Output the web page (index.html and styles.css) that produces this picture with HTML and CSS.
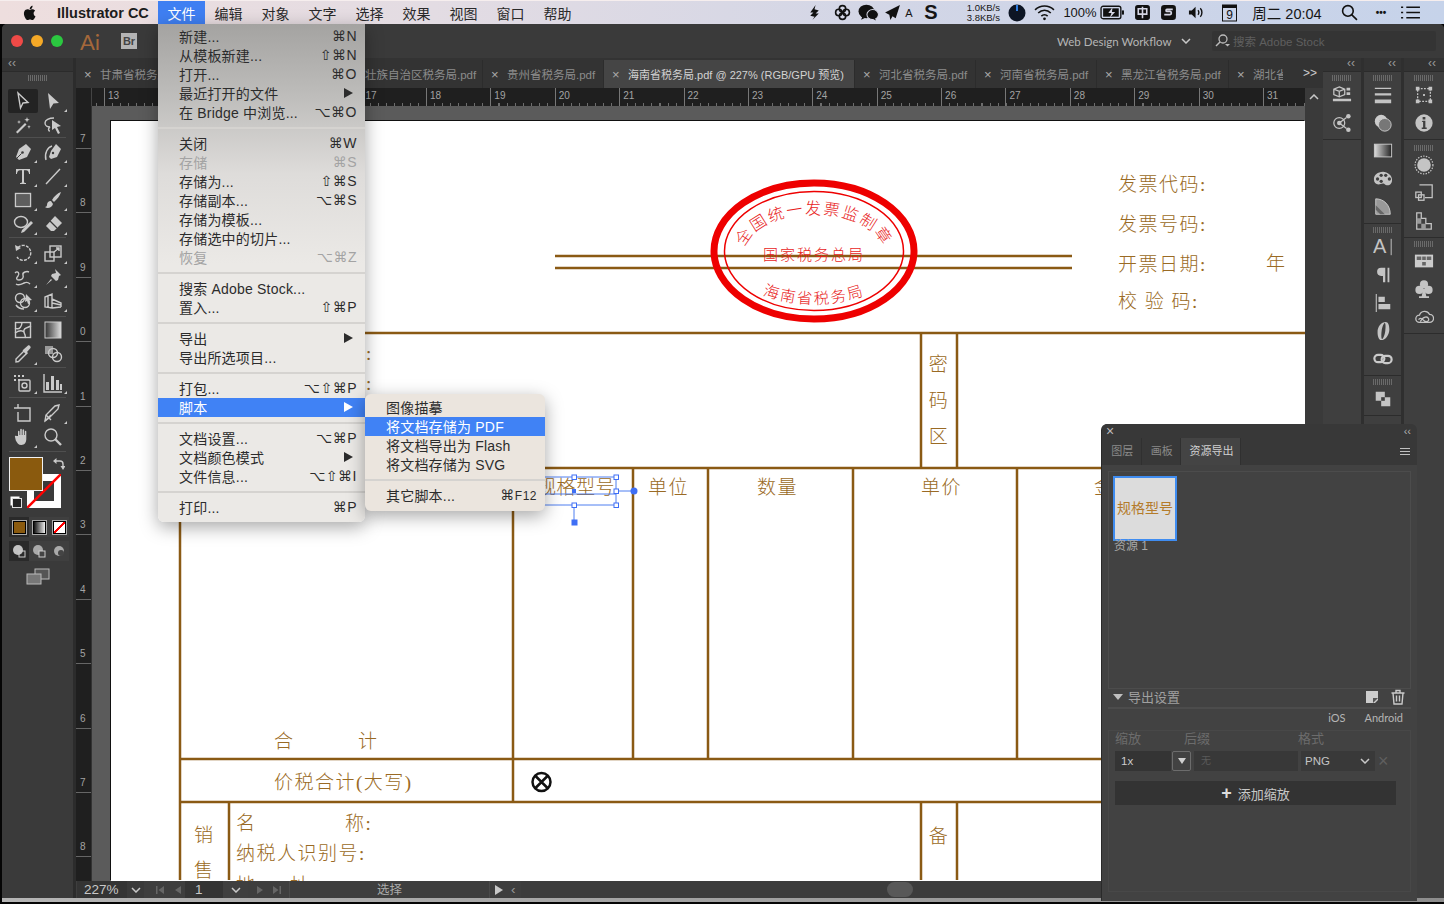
FILE: index.html
```html
<!DOCTYPE html>
<html lang="zh-CN">
<head>
<meta charset="UTF-8" />
<title>Illustrator CC</title>
<link rel="stylesheet" href="styles.css">
</head>
<body>

<!-- mac menu bar -->
<header class="menubar">
  <svg class="apple" viewBox="0 0 20 20"><path d="M14 10.500c0-2 1.600-2.900 1.700-3-1-1.400-2.400-1.600-2.900-1.600-1.200-.1-2.400.7-3 .7s-1.600-.7-2.600-.7c-1.400 0-2.600.8-3.300 2-1.400 2.400-.4 6 1 8 .7 1 1.500 2.100 2.500 2 1 0 1.400-.6 2.600-.6s1.500.6 2.600.6 1.800-1 2.400-2c.8-1.100 1.100-2.200 1.100-2.300-.1 0-2.100-.8-2.100-3.100zM12.100 4.600c.5-.7.900-1.600.8-2.600-.8 0-1.800.5-2.400 1.200-.5.600-1 1.600-.8 2.500.9.100 1.800-.4 2.400-1.100z"/></svg>
  <b class="appname">Illustrator CC</b>
  <nav class="menus">
    <span class="on">文件</span><span>编辑</span><span>对象</span><span>文字</span><span>选择</span><span>效果</span><span>视图</span><span>窗口</span><span>帮助</span>
  </nav>
  <div class="status">
    <svg class="mb" viewBox="0 0 16 16"><path d="M9 1L4 8h3l-3 3 4 1-2 3 6-6H9l3-3-4-1z"/></svg>
    <svg class="mb" viewBox="0 0 16 16"><g class="mb-ln"><circle cx="8" cy="4.500" r="3"/><circle cx="4.500" cy="8" r="3"/><circle cx="11.500" cy="8" r="3"/><circle cx="8" cy="11.500" r="3"/></g></svg>
    <svg class="mb mb-wide" viewBox="0 0 20 16"><ellipse cx="8" cy="7" rx="7.500" ry="6.500"/><ellipse cx="14" cy="10" rx="5.500" ry="4.800" stroke="#d5d6e4" stroke-width="1"/><path d="M4 12l-1 3 4-2zM16 13l1 2.500-3-1.500z"/></svg>
    <svg class="mb" viewBox="0 0 16 16"><path d="M15 1L1 8l4 2 1 5 2-3.500 3 2z"/></svg>
    <span class="st-a">A</span>
    <b class="st-s">S</b>
    <span class="st-net">1.0KB/s<br>3.8KB/s</span>
    <svg class="mb mb-big" viewBox="0 0 18 18"><circle cx="9" cy="9" r="8.500" fill="#0d1524"/><path d="M9 1v6" stroke="#2f7de0" stroke-width="2"/></svg>
    <svg class="mb mb-wide" viewBox="0 0 20 16"><g class="mb-ln"><path d="M1 5.500c5-5 13-5 18 0M4 8.500c3.500-3.500 8.500-3.500 12 0M7 11.500c1.700-1.700 4.300-1.700 6 0"/></g><circle cx="10" cy="14" r="1.300"/></svg>
    <span class="st-txt">100%</span>
    <svg class="mb mb-batt" viewBox="0 0 24 14"><rect x="1" y="1" width="19" height="12" rx="2" fill="none" stroke="#111" stroke-width="1.300"/><rect x="3" y="3" width="15" height="8"/><rect x="21" y="5" width="2" height="4"/><path d="M12 2L8 7.500h3L9.500 12l5-5.500h-3z" fill="#d5d6e4"/></svg>
    <svg class="mb" viewBox="0 0 16 16"><rect x="1" y="1" width="14" height="14" rx="2.500"/><path d="M4 4.500h8v5H4zM8 2.500v11" fill="none" stroke="#d5d6e4" stroke-width="1.500"/></svg>
    <svg class="mb" viewBox="0 0 16 16"><rect x="1" y="1" width="14" height="14" rx="3"/><path d="M12 5H6.500c-1 0-1 2 0 2h3c1.500 0 1.500 3 0 3H4" fill="none" stroke="#d5d6e4" stroke-width="1.700"/></svg>
    <svg class="mb" viewBox="0 0 18 16"><path d="M1 6h3l4-4v12l-4-4H1z"/><path class="mb-ln" d="M10.500 5.500c1.300 1.300 1.300 3.700 0 5M13 3.500c2.300 2.300 2.300 6.700 0 9"/></svg>
    <svg class="mb mb-cal" viewBox="0 0 16 18"><rect x="1" y="1" width="14" height="16" fill="none" stroke="#111"/><rect x="1" y="1" width="14" height="3"/><text x="8" y="15" text-anchor="middle" class="cal-num">9</text></svg>
    <span class="st-clock">周二 20:04</span>
    <svg class="mb" viewBox="0 0 16 16"><g class="mb-ln"><circle cx="6.500" cy="6.500" r="5"/><path d="M10 10l5 5"/></g></svg>
    <b class="st-dots">•••</b>
    <svg class="mb mb-wide" viewBox="0 0 20 14"><path class="mb-ln" d="M6 2h13M6 7h13M6 12h13M1 2h2M1 7h2M1 12h2"/></svg>
  </div>
</header>

<div class="window">
  <div class="titlebar">
    <i class="light red"></i><i class="light amber"></i><i class="light green"></i>
    <span class="ai">Ai</span>
    <span class="br">Br</span>
    <span class="workspace">Web Design Workflow<svg class="chev" viewBox="0 0 10 6"><path d="M1 1l4 4 4-4"/></svg></span>
    <div class="stock">
      <svg class="ic-sm" viewBox="0 0 16 16"><circle cx="9" cy="6" r="4" fill="none" stroke="#bbb" stroke-width="1.300"/><path d="M6 9l-4 4" stroke="#bbb" stroke-width="1.500"/><path d="M11 11h5l-2.500 2.500z" fill="#bbb"/></svg>
      <span>搜索 Adobe Stock</span>
    </div>
  </div>

  <div class="workspace-row">
    <!-- left tools -->
    <aside class="toolcol">
      <div class="collapse">‹‹</div>
      <div class="grip"></div>
      <div class="toolgroup tg-1">
        <div class="tool active"><svg class="ic" viewBox="0 0 20 20"><path class="ln" d="M5 2l10 9.500-5 .5-2.500 5z"/></svg></div>
        <div class="tool more"><svg class="ic" viewBox="0 0 20 20"><path d="M5 2l11 10-5.500.5L7 18z"/></svg></div>
        <div class="tool"><svg class="ic" viewBox="0 0 20 20"><path d="M3 17l9-9 1.500 1.500-9 9z"/><path d="M14 2l.7 2 2 .7-2 .7L14 7.500l-.7-2-2-.7 2-.7zM6 5l.5 1.500L8 7l-1.500.5L6 9l-.5-1.500L4 7l1.500-.5zM16 10l.5 1.200 1.200.5-1.200.5L16 14l-.5-1.800-1.200-.5 1.200-.5z"/></svg></div>
        <div class="tool"><svg class="ic" viewBox="0 0 20 20"><path class="ln" d="M11 3C6 3 2 5 2 8s3 4 5 4c-2 1-2 4 0 4"/><path d="M9 5l9 6-4 1 3 6-2 1-3-6-3 2z"/></svg></div>
      </div>
      <div class="toolgroup tg-2">
        <div class="tool more"><svg class="ic" viewBox="0 0 20 20"><path d="M13 2l5 5-4 8-8 3-3-3 3-8z"/><circle cx="9.500" cy="10.500" r="1.300" fill="#3a3a3a"/><path d="M3 17l5.500-5.500" stroke="#3a3a3a"/></svg></div>
        <div class="tool more"><svg class="ic" viewBox="0 0 20 20"><path class="ln" d="M3 18C1 11 5 5 9 4"/><path d="M13 2l5 5-4 8-6 2-2-2 2-6z"/><circle cx="10" cy="11" r="1.200" fill="#3a3a3a"/></svg></div>
        <div class="tool more"><svg class="ic" viewBox="0 0 20 20"><path d="M3 3h14v5h-.9c-.3-2-1.200-3.700-3.200-3.700h-1.900v11.200c0 1.200.5 1.400 2 1.500v1H7v-1c1.500-.1 2-.3 2-1.500V4.300H7.100c-2 0-2.900 1.700-3.200 3.700H3z"/></svg></div>
        <div class="tool more"><svg class="ic" viewBox="0 0 20 20"><path class="ln" d="M3 18L17 3"/></svg></div>
        <div class="tool more"><svg class="ic" viewBox="0 0 20 20"><rect x="3.500" y="4.500" width="13" height="11" fill="#5e5e5e"/><rect class="ln" x="2.500" y="3.500" width="15" height="13"/></svg></div>
        <div class="tool more"><svg class="ic" viewBox="0 0 20 20"><path d="M18 2c-3 1-7 4-9 8l2 2c3-3 6-6 7-10zM8 11c-3 0-4 2-4 4 0 1-1 2-2 2 2 2 7 1 8-3z"/></svg></div>
        <div class="tool more"><svg class="ic" viewBox="0 0 20 20"><ellipse class="ln" cx="8" cy="8" rx="6.500" ry="5.500"/><path d="M18 7l2 2-9 9-3 1 1-3z"/></svg></div>
        <div class="tool more"><svg class="ic" viewBox="0 0 20 20"><path d="M12 2l7 7-8 8H8l-5-5z"/><path d="M7 7l7 7" stroke="#3a3a3a" stroke-width="1.200"/></svg></div>
      </div>
      <div class="toolgroup tg-3">
        <div class="tool more"><svg class="ic" viewBox="0 0 20 20"><path class="ln" d="M5 4.500A7.500 7.500 0 1 1 4 14" stroke-dasharray="3 1.200"/><path d="M2 2l1 6 5-3z"/></svg></div>
        <div class="tool more"><svg class="ic" viewBox="0 0 20 20"><g class="ln"><rect x="7" y="3" width="11" height="11"/><rect x="2" y="9" width="9" height="9"/><path d="M11 9l5-4M13 5h3v3"/></g></svg></div>
        <div class="tool more"><svg class="ic" viewBox="0 0 20 20"><path class="ln" d="M2 6c3-3 5 1 3 3s-2 4 1 4 5-2 4-5 4-4 6-3M3 17c3 2 6 0 8-1s4-1 6 1"/></svg></div>
        <div class="tool more"><svg class="ic" viewBox="0 0 20 20"><path d="M12 2l6 6-2 1-1 4-2 1-5-5 1-2 4-1zM8 12l-5 6 6-5z"/></svg></div>
        <div class="tool more"><svg class="ic" viewBox="0 0 20 20"><g class="ln"><circle cx="7" cy="7" r="4.500"/><circle cx="12" cy="12" r="4.500"/><path d="M3 14c2 3 5 4 8 4"/></g><path d="M13 3l6 6-3 .5 1 3-2 .5-1-3-2 1z"/></svg></div>
        <div class="tool more"><svg class="ic" viewBox="0 0 20 20"><g class="ln"><path d="M2 16V6l7-3v14zM9 17l9-1M9 8l9 4v4M9 12l9 2M5 5v11"/></g></svg></div>
      </div>
      <div class="toolgroup tg-4">
        <div class="tool"><svg class="ic" viewBox="0 0 20 20"><rect class="ln" x="2.500" y="2.500" width="15" height="15"/><path class="ln" d="M2 8c5 3 7-3 7-6M18 6c-4 2-8 2-7 6s2 3 1 6M2 13c3-2 7-3 9-1"/></svg></div>
        <div class="tool"><svg class="ic" viewBox="0 0 20 20"><defs><linearGradient id="gr"><stop offset="0" stop-color="#333"/><stop offset="1" stop-color="#ddd"/></linearGradient></defs><rect x="2" y="2" width="16" height="16" fill="url(#gr)" stroke="#ccc"/></svg></div>
        <div class="tool more"><svg class="ic" viewBox="0 0 20 20"><path class="ln" d="M3 18l0-3 8-8 2.500 2.500-8 8z"/><path d="M11 5l4-3.500c1-.8 3.500 1.500 2.500 2.500L14 8l1 1-1.500 1.500-4-4L11 5z"/></svg></div>
        <div class="tool"><svg class="ic" viewBox="0 0 20 20"><rect x="2" y="2" width="8" height="8" fill="#999"/><circle class="ln" cx="10" cy="9" r="4.500"/><circle class="ln" cx="14" cy="13" r="4.500"/></svg></div>
      </div>
      <div class="toolgroup tg-5">
        <div class="tool more"><svg class="ic" viewBox="0 0 20 20"><path d="M1 2h2v2H1zM5 2h2v2H5zM9 2h2v2H9zM1 6h2v2H1zM5 6h2v2H5z"/><rect class="ln" x="6" y="7" width="11" height="11" rx="1"/><circle class="ln" cx="11.500" cy="12.500" r="2.500"/></svg></div>
        <div class="tool more"><svg class="ic" viewBox="0 0 20 20"><path d="M3 9h3v8H3zM8 3h3v14H8zM13 7h3v10h-3zM17 11h2v6h-2z"/><path class="ln" d="M1 1v18h18"/></svg></div>
      </div>
      <div class="toolgroup tg-6">
        <div class="tool"><svg class="ic" viewBox="0 0 20 20"><path class="ln" d="M1 5h16M5 1v4M5 5l12 0v13H5V9"/></svg></div>
        <div class="tool more"><svg class="ic" viewBox="0 0 20 20"><path class="ln" d="M2 18l1-6 9-9 4-1-1 4-9 9z"/><path class="ln" d="M3 12l5 5M8 12l-6 6"/></svg></div>
        <div class="tool more"><svg class="ic" viewBox="0 0 20 20"><path d="M5 9V4.500c0-1 1.500-1 1.500 0V8h.7V2.500c0-1 1.600-1 1.600 0V8h.7V3c0-1 1.600-1 1.600 0v5h.7V4.500c0-1 1.500-1 1.500 0V12c0 3-1.500 6-5 6-3 0-4-2-5.500-4.500L2 10c-.5-1 .8-1.700 1.500-1z"/></svg></div>
        <div class="tool"><svg class="ic" viewBox="0 0 20 20"><circle class="ln" cx="8" cy="8" r="6"/><path class="ln-b" d="M12 12l6 6"/></svg></div>
      </div>

      <div class="colors">
        <div class="swatches">
          <div class="stroke-swatch"><svg viewBox="0 0 34 34"><path d="M0 34L34 0" stroke="#f00" stroke-width="2.500"/></svg></div>
          <div class="fill-swatch"></div>
          <svg class="swap" viewBox="0 0 12 12"><path class="ln" d="M2 3h5c2 0 3 1 3 3v4"/><path d="M3.500 0v6L0 3zM7.500 8h5L10 12z"/></svg>
          <div class="mini-default"></div>
        </div>
      </div>
      <div class="chiprow">
        <div class="chip chip-on"><i class="mini mini-fill"></i></div>
        <div class="chip"><i class="mini mini-grad"></i></div>
        <div class="chip"><i class="mini mini-none"></i></div>
      </div>
      <div class="chiprow chiprow2">
        <div class="chip chip-on"><svg class="ic-sm" viewBox="0 0 16 16"><circle cx="7" cy="7" r="5"/><rect x="8" y="8" width="6" height="6" fill="none" stroke="#ccc"/></svg></div>
        <div class="chip"><svg class="ic-sm" viewBox="0 0 16 16"><circle cx="7" cy="7" r="5" fill="#aaa"/><rect x="8" y="8" width="6" height="6" fill="#444" stroke="#ccc"/></svg></div>
        <div class="chip"><svg class="ic-sm" viewBox="0 0 16 16"><circle cx="8" cy="8" r="5" fill="#aaa"/><circle cx="10" cy="10" r="3" fill="#444"/></svg></div>
      </div>
      <div class="screenmode"><svg viewBox="0 0 24 18"><rect x="9" y="1" width="14" height="10" fill="#555" stroke="#bbb"/><rect x="1" y="6" width="14" height="10" fill="#777" stroke="#bbb"/></svg></div>
    </aside>

    <main class="doc">
      <div class="tabs">
        <div class="tab"><i>×</i>甘肃省税务局.pdf</div>
        <div class="tab"><i>×</i>广东省税务局.pdf</div>
        <div class="tab tab-165"><i>×</i>广西壮族自治区税务局.pdf</div>
        <div class="tab"><i>×</i>贵州省税务局.pdf</div>
        <div class="tab tab-active"><i>×</i>海南省税务局.pdf @ 227% (RGB/GPU 预览)</div>
        <div class="tab"><i>×</i>河北省税务局.pdf</div>
        <div class="tab"><i>×</i>河南省税务局.pdf</div>
        <div class="tab tab-132"><i>×</i>黑龙江省税务局.pdf</div>
        <div class="tab tab-54"><i>×</i>湖北省税务局.pdf</div>
        <div class="tab-more">&gt;&gt;</div>
      </div>
      <div class="hruler-row">
        <div class="corner"></div>
        <div class="hruler">
          <span class="first"></span><span>13</span><span>14</span><span>15</span><span>16</span><span>17</span><span>18</span><span>19</span><span>20</span><span>21</span><span>22</span><span>23</span><span>24</span><span>25</span><span>26</span><span>27</span><span>28</span><span>29</span><span>30</span><span>31</span>
        </div>
        <div class="vscroll-top"><svg class="chev" viewBox="0 0 10 6"><path d="M1 5l4-4 4 4"/></svg></div>
      </div>
      <div class="doc-main">
        <div class="vruler">
          <span class="first">7</span><span>8</span><span>9</span><span>0</span><span>1</span><span>2</span><span>3</span><span>4</span><span>5</span><span>6</span><span>7</span><span>8</span>
        </div>
        <div class="pasteboard">
          <div class="artboard">
            <svg class="art" viewBox="111 121 1194 760">
              <g class="rules">
                <path d="M555 256H1072M555 268H1072"/>
                <path d="M180 333H1305M180 468H1305M180 759H1305M180 802H1305"/>
                <path d="M180 333V880M513 468V802M633 468V759M708 468V759M853 468V759M1017 468V759M229 802V880M921 333V468M957 333V468M921 802V880M957 802V880"/>
              </g>
              <g class="seal">
                <ellipse cx="814" cy="251" rx="100" ry="68" stroke-width="7"/>
                <ellipse cx="814" cy="251" rx="89.500" ry="59.500" stroke-width="1.500"/>
              </g>
              <path id="sealTop" d="M744 254 A 70 40 0 0 1 884 254" fill="none"/>
              <path id="sealBottom" d="M760 294 Q 814 314 868 294" fill="none"/>
              <g class="sealtext">
                <text class="seal-a"><textPath href="#sealTop" startOffset="50%" text-anchor="middle">全国统一发票监制章</textPath></text>
                <text x="814" y="260" text-anchor="middle" class="seal-b">国家税务总局</text>
                <text class="seal-c"><textPath href="#sealBottom" startOffset="50%" text-anchor="middle">海南省税务局</textPath></text>
              </g>
              <g class="ink">
                <text x="1118" y="191">发票代码:</text>
                <text x="1118" y="231">发票号码:</text>
                <text x="1118" y="271">开票日期:</text>
                <text x="1266" y="270">年</text>
                <text x="1118" y="308">校 验 码:</text>
                <text x="366" y="360">:</text>
                <text x="366" y="390">:</text>
                <text x="939" y="371" text-anchor="middle">密</text>
                <text x="939" y="407" text-anchor="middle">码</text>
                <text x="939" y="443" text-anchor="middle">区</text>
                <text x="537" y="494" class="wide2">规格型号</text>
                <text x="648" y="494">单位</text>
                <text x="757" y="494">数量</text>
                <text x="921" y="494">单价</text>
                <text x="1094" y="494">金额</text>
                <text x="274" y="748">合</text>
                <text x="358" y="748">计</text>
                <text x="274" y="789">价税合计(大写)</text>
                <text x="194" y="842">销</text>
                <text x="194" y="877">售</text>
                <text x="236" y="830">名</text>
                <text x="345" y="830">称:</text>
                <text x="236" y="860">纳税人识别号:</text>
                <text x="236" y="892">地</text>
                <text x="290" y="892">址</text>
                <text x="345" y="892">、</text>
                <text x="939" y="843" text-anchor="middle">备</text>
              </g>
              <g class="otimes">
                <circle cx="541.500" cy="782" r="9"/>
                <path d="M535 775.500l13 13M548 775.500l-13 13"/>
              </g>
              <g class="select">
                <path d="M530 477H616V505H530M530 494H616M616 491H634M574 505V522"/>
                <circle cx="634" cy="491" r="3.500" class="sel-fill"/>
                <rect x="571.500" y="519.500" width="6" height="6" class="sel-fill"/>
                <rect x="572" y="489" width="4" height="4" class="sel-fill"/>
                <g class="handles">
                  <rect x="572" y="475" width="4.500" height="4.500"/>
                  <rect x="614" y="475" width="4.500" height="4.500"/>
                  <rect x="614" y="489" width="4.500" height="4.500"/>
                  <rect x="614" y="503" width="4.500" height="4.500"/>
                  <rect x="572" y="503" width="4.500" height="4.500"/>
                </g>
              </g>
            </svg>
          </div>
        </div>
        <div class="vscroll"></div>
      </div>
      <div class="statusbar">
        <span class="zoom-box">227%</span>
        <span class="combo"><svg class="chev" viewBox="0 0 10 6"><path d="M1 1l4 4 4-4"/></svg></span>
        <span class="nav nav-first">
          <svg class="nav-ic" viewBox="0 0 10 10"><path d="M1 1h1.500v8H1zM9 1v8L3.500 5z"/></svg>
          <svg class="nav-ic" viewBox="0 0 10 10"><path d="M8 1v8L2 5z"/></svg>
        </span>
        <span class="page-box">1</span>
        <span class="combo combo-page"><svg class="chev" viewBox="0 0 10 6"><path d="M1 1l4 4 4-4"/></svg></span>
        <span class="nav nav-next">
          <svg class="nav-ic" viewBox="0 0 10 10"><path d="M2 1v8l6-4z"/></svg>
          <svg class="nav-ic" viewBox="0 0 10 10"><path d="M1 1v8l5.500-4zM7.500 1H9v8H7.500z"/></svg>
        </span>
        <span class="tool-name">选择</span>
        <svg class="play" viewBox="0 0 10 10"><path d="M1 0v10l8-5z"/></svg>
        <span class="hs-left">‹</span>
        <div class="hscroll"><i></i></div>
      </div>
    </main>

    <!-- right docks -->
    <aside class="docks">
      <div class="dockcol dock-a">
        <div class="collapse">‹‹</div>
        <div class="dockbox">
          <div class="grip"></div>
          <svg class="dk" viewBox="0 0 22 22"><path class="ln" d="M8 2l6 2.500v6L8 13l-6-2.500v-6zM2 4.500L8 7l6-2.500M8 7v6"/><path d="M16 3h4v3h-4zM16 8h4v3h-4zM1 15h20v3H1z"/></svg>
          <svg class="dk" viewBox="0 0 22 22"><circle class="ln" cx="8" cy="11" r="6"/><circle cx="8" cy="11" r="2.500"/><circle cx="18" cy="3.500" r="2.500"/><circle cx="18" cy="18.500" r="2.500"/><path class="ln" d="M16 5l-8 6 8 6"/></svg>
        </div>
      </div>
      <div class="dockcol dock-b">
        <div class="collapse">‹‹</div>
        <div class="dockbox">
          <div class="grip"></div>
          <svg class="dk" viewBox="0 0 22 22"><path d="M2 3h18v1.500H2zM2 9h18v2.500H2zM2 16h18v4H2z"/></svg>
          <svg class="dk" viewBox="0 0 22 22"><circle cx="9" cy="9" r="7" fill="#ccc"/><circle cx="13" cy="13" r="7" fill="#777" stroke="#ccc"/></svg>
          <svg class="dk" viewBox="0 0 22 22"><defs><linearGradient id="gr2"><stop offset="0" stop-color="#ddd"/><stop offset="1" stop-color="#222"/></linearGradient></defs><rect x="1.500" y="3.500" width="19" height="14" fill="url(#gr2)" stroke="#ccc"/></svg>
          <svg class="dk" viewBox="0 0 22 22"><path d="M11 3C5 3 1 7 1 11s2 6 5 6c2 0 3-1 5-1s2 2 5 2 5-3 5-6c0-5-5-9-10-9z"/><g fill="#3f3f3f"><circle cx="9" cy="7" r="1.800"/><circle cx="14" cy="7" r="1.800"/><circle cx="18" cy="11" r="1.800"/><circle cx="5" cy="11" r="1.800"/><circle cx="9" cy="13.500" r="1.800"/></g></svg>
          <svg class="dk" viewBox="0 0 22 22"><path d="M3 2c9 0 16 7 16 17H3z" fill="#999" stroke="#ccc"/><path d="M3 9l10 10H8L3 14z" fill="#666"/></svg>
        </div>
        <div class="dockbox">
          <div class="grip"></div>
          <svg class="dk dk-text" viewBox="0 0 22 22"><text x="0" y="18" class="dk-a">A</text><path d="M20 2v18" stroke="#ccc"/></svg>
          <svg class="dk" viewBox="0 0 22 22"><path d="M11 3v16h2.500V3zM16 3v16h2V3zM11 3H9a4.500 4.500 0 0 0 0 9h2z"/></svg>
          <svg class="dk" viewBox="0 0 22 22"><path d="M3 1h1.200v20H3zM6 4h7v6H6zM6 12h13v6H6z"/></svg>
          <svg class="dk" viewBox="0 0 22 22"><path d="M14 1c-5 0-9 5-9 11 0 5 1.500 9 4 9 5 0 9-6 9-12 0-5-1.500-8-4-8zm-1 1c1 1 1 5 .5 9s-2 8-3.500 9c-1-1-1-5-.5-9s2-8 3.500-9z"/></svg>
          <svg class="dk" viewBox="0 0 22 22"><g class="ln-b"><rect x="1.500" y="6.500" width="11" height="8" rx="4"/><rect x="9.500" y="7.500" width="11" height="8" rx="4"/></g></svg>
        </div>
        <div class="dockbox">
          <div class="grip"></div>
          <svg class="dk" viewBox="0 0 22 22"><path d="M3 3h10v6h6v10H9v-6H3z"/><path d="M9 9h4v4H9z" fill="#3f3f3f"/></svg>
        </div>
      </div>
      <div class="dockcol dock-c">
        <div class="collapse">‹‹</div>
        <div class="dockbox">
          <div class="grip"></div>
          <svg class="dk" viewBox="0 0 22 22"><rect class="ln" x="4" y="4" width="14" height="14" stroke-dasharray="2 1.500"/><path d="M2 2h4v4H2zM16 2h4v4h-4zM2 16h4v4H2zM16 16h4v4h-4zM10 10h2v2h-2z"/></svg>
          <svg class="dk" viewBox="0 0 22 22"><circle cx="11" cy="11" r="9.500"/><path d="M9.500 8.500h3V16h1.500v1.500H8.500V16H10v-6H8.500zM9.500 4.500h3v2.700h-3z" fill="#3f3f3f"/></svg>
        </div>
        <div class="dockbox dock-mid">
          <div class="grip"></div>
          <svg class="dk" viewBox="0 0 22 22"><circle cx="11" cy="11" r="7.500"/><circle class="ln" cx="11" cy="11" r="9.800" stroke-dasharray="1.500 1.500"/></svg>
          <svg class="dk" viewBox="0 0 22 22"><path class="ln" d="M6 2h14v14H12"/><rect class="ln" x="2" y="10" width="6" height="6"/><rect class="ln" x="5" y="13" width="6" height="6"/></svg>
          <svg class="dk" viewBox="0 0 22 22"><path class="ln" d="M3 2h5v6h5v6h6v6H3z"/><path d="M3 8h5v6H3zM8 14h5v6H8z" fill="#999"/></svg>
        </div>
        <div class="dockbox">
          <div class="grip"></div>
          <svg class="dk" viewBox="0 0 22 22"><rect x="1" y="4" width="20" height="14" fill="#ccc"/><path d="M3 6h5v4H3zM9 6h4v4H9zM14 6h5v4h-5zM9 12h4v4H9z" fill="#666"/></svg>
          <svg class="dk" viewBox="0 0 22 22"><circle cx="11" cy="6" r="4.500"/><circle cx="6" cy="12" r="4.500"/><circle cx="16" cy="12" r="4.500"/><path d="M10 11h2l1.500 8h3v2h-11v-2h3z"/></svg>
          <svg class="dk" viewBox="0 0 22 22"><path class="ln" d="M6 17a4 4 0 0 1 0-8 6 6 0 0 1 11-1 4.500 4.500 0 0 1 0 9H6zM7 16c3-6 8-6 9-3s-3 4-5 2-4-4-6-1"/></svg>
        </div>
      </div>
    </aside>
  </div>
</div>
<div class="window-foot"></div>

<!-- file menu -->
<div class="menu filemenu">
  <div class="mi"><span>新建...</span><span class="sc">⌘N</span></div>
  <div class="mi"><span>从模板新建...</span><span class="sc">⇧⌘N</span></div>
  <div class="mi"><span>打开...</span><span class="sc">⌘O</span></div>
  <div class="mi"><span>最近打开的文件</span><i class="arrow"></i></div>
  <div class="mi"><span>在 Bridge 中浏览...</span><span class="sc">⌥⌘O</span></div>
  <div class="sep"></div>
  <div class="mi"><span>关闭</span><span class="sc">⌘W</span></div>
  <div class="mi off"><span>存储</span><span class="sc">⌘S</span></div>
  <div class="mi"><span>存储为...</span><span class="sc">⇧⌘S</span></div>
  <div class="mi"><span>存储副本...</span><span class="sc">⌥⌘S</span></div>
  <div class="mi"><span>存储为模板...</span></div>
  <div class="mi"><span>存储选中的切片...</span></div>
  <div class="mi off"><span>恢复</span><span class="sc">⌥⌘Z</span></div>
  <div class="sep"></div>
  <div class="mi"><span>搜索 Adobe Stock...</span></div>
  <div class="mi"><span>置入...</span><span class="sc">⇧⌘P</span></div>
  <div class="sep"></div>
  <div class="mi"><span>导出</span><i class="arrow"></i></div>
  <div class="mi"><span>导出所选项目...</span></div>
  <div class="sep"></div>
  <div class="mi"><span>打包...</span><span class="sc">⌥⇧⌘P</span></div>
  <div class="mi hi"><span>脚本</span><i class="arrow"></i></div>
  <div class="sep"></div>
  <div class="mi"><span>文档设置...</span><span class="sc">⌥⌘P</span></div>
  <div class="mi"><span>文档颜色模式</span><i class="arrow"></i></div>
  <div class="mi"><span>文件信息...</span><span class="sc">⌥⇧⌘I</span></div>
  <div class="sep"></div>
  <div class="mi"><span>打印...</span><span class="sc">⌘P</span></div>
</div>

<div class="menu submenu">
  <div class="mi"><span>图像描摹</span></div>
  <div class="mi hi"><span>将文档存储为 PDF</span></div>
  <div class="mi"><span>将文档导出为 Flash</span></div>
  <div class="mi"><span>将文档存储为 SVG</span></div>
  <div class="sep"></div>
  <div class="mi"><span>其它脚本...</span><span class="sc">⌘<small>F12</small></span></div>
</div>

<!-- floating asset export panel -->
<section class="panel">
  <div class="panel-head"><span class="panel-x">×</span><span class="panel-col">‹‹</span></div>
  <div class="panel-tabs">
    <span>图层</span><span>画板</span><span class="cur">资源导出</span>
    <div class="hamburger"></div>
  </div>
  <div class="assets">
    <div class="thumb">规格型号</div>
    <div class="thumb-name">资源 1</div>
  </div>
  <div class="export-head">
    <i class="tri"></i><span>导出设置</span>
    <svg class="ic-sm push" viewBox="0 0 16 16"><path d="M2 2h12v9l-3 3H2z" fill="#ccc"/><path d="M9 14v-5h5z" fill="#555"/></svg>
    <svg class="ic-sm" viewBox="0 0 16 16"><path class="ln" d="M3 4h10l-1 11H4zM1.500 4h13M6 4V1.500h4V4M6.500 6.500v6M9.500 6.500v6"/></svg>
  </div>
  <div class="platforms"><span>iOS</span><span>Android</span></div>
  <div class="export-box">
    <div class="ex-labels"><span class="l1">缩放</span><span class="l2">后缀</span><span>格式</span></div>
    <div class="ex-row">
      <span class="f-scale">1x</span>
      <span class="f-drop"><i></i></span>
      <span class="f-suffix">无</span>
      <span class="f-format">PNG<svg class="chev" viewBox="0 0 10 6"><path d="M1 1l4 4 4-4"/></svg></span>
      <span class="f-del">×</span>
    </div>
    <div class="add-scale"><b>+</b>添加缩放</div>
  </div>
</section>

</body>
</html>
```

FILE: styles.css
```css
* { box-sizing: border-box; }
html, body {
  margin: 0;
  padding: 0;
}
body {
  width: 1444px;
  height: 904px;
  overflow: hidden;
  position: relative;
  background: #050505;
  font-family: "Liberation Sans", "Noto Sans CJK SC", sans-serif;
  color: #222;
}

/* menu bar */
.menubar {
  height: 24px;
  display: flex;
  align-items: center;
  background: linear-gradient(90deg, #eedede 0%, #e3dce3 30%, #d3d6e6 60%, #c6d3ea 100%);
  border-top: 1px solid #f6eeee;
  font-size: 14px;
}
.apple { width: 18px; height: 18px; margin-left: 21px; fill: #111; }
.appname { margin-left: 18px; width: 101px; font-size: 14.500px; color: #1c1c1c; }
.menus { display: flex; align-self: stretch; }
.menus span {
  width: 47px;
  display: flex;
  align-items: center;
  justify-content: center;
  color: #2a2a2a;
}
.menus .on { background: #3f7ff2; color: #fff; }
.status {
  margin-left: auto;
  margin-right: 18px;
  display: grid;
  grid-template-columns: 28px 28px 24px 24px 10px 34px 60px 18px 36px 36px 28px 32px 20px 36px 30px 86px 38px 26px 32px;
  align-items: center;
  justify-items: center;
  color: #151515;
}
.mb { width: 17px; height: 17px; fill: #111; }
.mb-wide { width: 21px; }
.mb-batt { width: 25px; height: 15px; }
.mb-big { width: 18px; height: 18px; }
.mb-cal { height: 18px; }
.cal-num { font-size: 12px; fill: #111; font-family: "Liberation Sans", sans-serif; }
.mb-ln { fill: none; stroke: #111; stroke-width: 1.500; }
.st-a { font-size: 11px; }
.st-s { font-size: 20px; font-family: "Liberation Sans", sans-serif; }
.st-net { font-size: 9.500px; line-height: 9.500px; text-align: right; justify-self: end; padding-right: 8px; }
.st-txt { font-size: 13px; }
.st-clock { font-size: 14.500px; }
.st-dots { font-size: 10px; letter-spacing: 0; }

/* window */
.window {
  height: 874px;
  margin-left: 2px;
  display: flex;
  flex-direction: column;
  background: #3a3a3a;
  border-radius: 5px 5px 0 0;
  overflow: hidden;
}
.window-foot {
  height: 4px;
  margin-left: 2px;
  background: linear-gradient(90deg, #b5b5b5, #8d8d8d);
}
.titlebar {
  height: 34px;
  flex: none;
  display: flex;
  align-items: center;
  background: #3a3a3a;
  padding-left: 9px;
}
.light { width: 12px; height: 12px; border-radius: 50%; margin-right: 8px; }
.red { background: #ef4a47; }
.amber { background: #f5a927; }
.green { background: #2bc840; }
.ai { margin-left: 9px; width: 41px; font-family: "Lato", sans-serif; font-size: 22px; color: #a5683a; }
.br {
  width: 16px;
  height: 16px;
  background: #b4b4b4;
  color: #444;
  font-size: 11px;
  font-weight: bold;
  line-height: 16px;
  text-align: center;
}
.workspace {
  margin-left: auto;
  display: flex;
  align-items: center;
  gap: 10px;
  width: 152px;
  font-family: "Lato", sans-serif;
  font-size: 11.500px;
  color: #b5b5b5;
}
.stock {
  width: 224px;
  height: 20px;
  margin: 0 8px 0 3px;
  display: flex;
  align-items: center;
  gap: 3px;
  padding-left: 2px;
  background: #343434;
  border-radius: 2px;
  color: #5f5f5f;
  font-size: 11.500px;
}
.ic-sm { width: 16px; height: 16px; }
.chev { width: 10px; height: 6px; fill: none; stroke: #c8c8c8; stroke-width: 1.500; }

.workspace-row { flex: 1; display: flex; min-height: 0; }

/* tool column */
.toolcol {
  width: 74px;
  flex: none;
  background: #3a3a3a;
  border-right: 3px solid #2c2c2c;
}
.collapse {
  height: 14px;
  background: #333;
  color: #9c9c9c;
  font-size: 12px;
  line-height: 11px;
  padding-left: 6px;
  border-bottom: 1px solid #2b2b2b;
}
.grip {
  height: 6px;
  width: 20px;
  margin: 3px auto 0;
  background: repeating-linear-gradient(90deg, #6a6a6a 0 1px, transparent 1px 2px);
}
.toolcol .grip { margin-bottom: 7px; }
.toolgroup {
  display: grid;
  grid-template-columns: 30px 30px;
  grid-auto-rows: 24px;
  justify-content: center;
  align-content: center;
  border-bottom: 1px solid #4f4f4f;
  margin: 0 7px;
  background: #3a3a3a;
}
.tg-1 { height: 50px; }
.tg-2 { height: 100px; }
.tg-3 { height: 79px; }
.tg-4 { height: 51px; }
.tg-5 { height: 30px; }
.tg-6 { height: 54px; }
.tool {
  position: relative;
  display: flex;
  align-items: center;
  justify-content: center;
}
.tool.active { background: #232323; border-radius: 2px; }
.tool.more::after {
  content: "";
  position: absolute;
  right: 1px;
  bottom: 1px;
  border-left: 3px solid transparent;
  border-bottom: 3px solid #c8c8c8;
}
.ic { width: 20px; height: 20px; fill: #cacaca; }
.ln { fill: none; stroke: #cacaca; stroke-width: 1.400; }
.ln-b { fill: none; stroke: #cacaca; stroke-width: 2.400; }

.colors { padding: 5px 0 0 7px; }
.swatches { position: relative; height: 54px; width: 56px; }
.fill-swatch {
  position: absolute;
  left: 0;
  top: 0;
  width: 34px;
  height: 34px;
  background: #8a5a0e;
  border: 1px solid #f2f2f2;
}
.stroke-swatch {
  position: absolute;
  left: 18px;
  top: 17px;
  width: 34px;
  height: 34px;
  background: #3a3a3a;
  border: 7px solid #fff;
}
.stroke-swatch svg {
  position: absolute;
  left: -7px;
  top: -7px;
  width: 34px;
  height: 34px;
}
.swap { position: absolute; left: 44px; top: 1px; width: 12px; height: 12px; fill: #cacaca; }
.mini-default {
  position: absolute;
  left: 3px;
  top: 41px;
  width: 10px;
  height: 10px;
  background: #222;
  border: 1px solid #ddd;
  box-shadow: -2px -2px 0 -0.500px #fff;
}
.chiprow {
  display: flex;
  margin: 6px 0 0 7px;
  width: 60px;
  height: 20px;
  background: #3f3f3f;
}
.chiprow2 { margin-top: 4px; }
.chip { flex: 1; display: flex; align-items: center; justify-content: center; }
.chip-on { background: #2a2a2a; }
.chip svg { fill: #c4c4c4; }
.mini { width: 13px; height: 13px; border: 1px solid #000; outline: 1px solid #aaa; }
.mini-fill { background: #8a5a0e; }
.mini-grad { background: linear-gradient(90deg, #111, #eee); }
.mini-none { background: linear-gradient(135deg, #fff 42%, #f00 42% 58%, #fff 58%); }
.screenmode { margin: 7px 0 0 24px; width: 24px; height: 18px; }

/* document column */
.doc { flex: 1; min-width: 0; display: flex; flex-direction: column; }
.tabs {
  height: 30px;
  flex: none;
  display: flex;
  padding-top: 2px;
  background: #333;
  font-size: 11.500px;
  color: #8c8c8c;
  overflow: hidden;
}
.tab {
  width: 121px;
  flex: none;
  display: flex;
  align-items: center;
  padding-left: 8px;
  white-space: nowrap;
  overflow: hidden;
  border-right: 1px solid #2c2c2c;
}
.tab i { flex: none; font-style: normal; width: 16px; color: #aaa; font-size: 13px; }
.tab-165 { width: 165px; }
.tab-132 { width: 132px; }
.tab-54 { width: 54px; border-right: 0; }
.tab-active { width: 251px; background: #454545; color: #d2d2d2; font-size: 11px; }
.tab-more { flex: 1; padding-left: 14px; text-align: center; line-height: 26px; color: #ccc; font-size: 12px; }
.hruler-row { height: 18px; flex: none; display: flex; background: #1f1f1f; }
.corner { width: 16px; flex: none; background: #1f1f1f; border-right: 1px solid #444; }
.hruler {
  flex: 1;
  display: flex;
  overflow: hidden;
  color: #a3a3a3;
  font-size: 10px;
  background: repeating-linear-gradient(90deg, #6d6d6d 0 1px, transparent 1px 8.050px) 4px 100% / 100% 3px no-repeat;
}
.hruler span {
  flex: 0 0 64.400px;
  padding: 2px 0 0 3px;
  border-left: 1px solid #777;
}
.hruler .first { flex-basis: 12px; border-left: 0; }
.vscroll-top {
  width: 18px;
  flex: none;
  background: #3a3a3a;
  display: flex;
  align-items: center;
  justify-content: center;
}
.doc-main { flex: 1; min-height: 0; display: flex; }
.vruler {
  width: 16px;
  flex: none;
  display: flex;
  flex-direction: column;
  overflow: hidden;
  background: #1f1f1f;
  color: #a3a3a3;
  font-size: 10px;
  border-right: 1px solid #333;
}
.vruler span {
  flex: 0 0 64.400px;
  display: flex;
  align-items: flex-end;
  padding: 0 0 4px 4px;
  border-bottom: 1px solid #666;
}
.vruler .first { flex-basis: 43px; }
.pasteboard {
  flex: 1;
  min-width: 0;
  background: #5b5b5b;
  padding: 15px 0 0 19px;
}
.artboard {
  height: 100%;
  background: #fff;
  box-shadow: -1px -1px 0 #111;
  overflow: hidden;
}
.art { display: block; width: 1194px; height: 760px; font-family: "Liberation Serif", "Noto Sans CJK SC", serif; font-weight: 300; }
.rules { fill: none; stroke: #8a5a14; stroke-width: 2.500; }
.seal ellipse { fill: none; stroke: #ee0000; }
.sealtext { fill: #e81c1c; }
.seal-a { font-size: 16px; letter-spacing: 2px; }
.seal-b { font-size: 15px; letter-spacing: 2px; }
.seal-c { font-size: 15.500px; letter-spacing: 2px; }
.ink { fill: #9a6a24; font-size: 19px; letter-spacing: 1.500px; }
.wide2 { letter-spacing: 0.500px; }
.otimes { fill: none; stroke: #111; stroke-width: 2.500; }
.select { fill: none; stroke: #4f7ff0; stroke-width: 1; }
.sel-fill { fill: #3f6ff5; stroke: none; }
.handles rect { fill: #fff; stroke: #3f6ff5; }
.vscroll { width: 18px; flex: none; background: #3a3a3a; }

/* status bar */
.statusbar {
  height: 17px;
  flex: none;
  display: flex;
  align-items: stretch;
  background: #3e3e3e;
  color: #c8c8c8;
  font-size: 13.500px;
  line-height: 18px;
}
.zoom-box { width: 50px; margin-left: 1px; padding-left: 7px; background: #343434; }
.combo { width: 17px; display: flex; align-items: center; justify-content: center; background: #3a3a3a; }
.combo-page { width: 25px; background: #3f3f3f; }
.nav { width: 41px; display: flex; align-items: center; gap: 8px; padding-left: 11px; }
.nav-next { gap: 7px; padding-left: 7px; }
.nav-ic { width: 10px; height: 10px; fill: #666; }
.page-box { width: 38px; padding-left: 10px; background: #343434; }
.tool-name { width: 201px; text-align: center; font-size: 12.500px; color: #aaa; border-left: 1px solid #4a4a4a; border-right: 1px solid #4a4a4a; }
.play { width: 10px; height: 10px; align-self: center; margin-left: 4px; fill: #c8c8c8; }
.hs-left { margin-left: 7px; width: 10px; color: #999; }
.hscroll { flex: 1; position: relative; background: #3c3c3c; }
.hscroll i {
  position: absolute;
  left: 366px;
  top: 1px;
  width: 26px;
  height: 15px;
  border-radius: 8px;
  background: #585858;
}

/* right docks */
.docks { width: 121px; flex: none; display: flex; background: #2f2f2f; }
.dockcol { width: 37px; margin-left: 3px; background: #3f3f3f; }
.dock-a { margin-left: 0; width: 38px; }
.dock-c { flex: 1; }
.dockcol .collapse { padding-left: 24px; height: 14px; }
.dockbox {
  display: flex;
  flex-direction: column;
  align-items: center;
  gap: 8px;
  padding-bottom: 6px;
  border-bottom: 1px solid #2c2c2c;
}
.dockbox .grip { margin: 3px auto -4px; }
.dock-mid { padding-top: 2px; }
.dk { width: 20px; height: 20px; fill: #c4c4c4; }
.dk .ln { stroke: #c4c4c4; }
.dk-a { font-size: 22px; font-family: "Liberation Sans", sans-serif; }

/* menus */
.menu {
  position: absolute;
  font-size: 14px;
  color: #2c2c2c;
  box-shadow: 0 5px 18px rgba(0, 0, 0, .35);
}
.filemenu {
  left: 158px;
  top: 24px;
  width: 207px;
  height: 498px;
  padding-top: 2.500px;
  border-radius: 0 0 6px 6px;
  background: linear-gradient(180deg, #a4a3a1 0, #bdbcba 70px, #dedcda 150px, #ebe9e6 240px, #ebe9e6 100%);
}
.submenu {
  left: 365px;
  top: 394px;
  width: 180px;
  height: 117px;
  padding-top: 3.500px;
  border-radius: 6px;
  background: #ebe5de;
}
.mi {
  height: 19px;
  display: flex;
  align-items: center;
  justify-content: space-between;
  padding: 0 8px 0 21px;
  white-space: nowrap;
  letter-spacing: .2px;
}
.mi.off { color: #a3a3a3; }
.mi.hi { background: #4082f5; color: #fff; }
.sc { font-family: "Liberation Sans", "DejaVu Sans", sans-serif; font-size: 14px; letter-spacing: .5px; }
.sc small { font-size: 12px; }
.sep { height: 12px; position: relative; }
.sep::after {
  content: "";
  position: absolute;
  left: 0;
  right: 0;
  top: 5px;
  height: 2px;
  background: #d5d3d0;
}
.arrow {
  width: 0;
  height: 0;
  margin-right: 4px;
  border-left: 9px solid #2c2c2c;
  border-top: 5px solid transparent;
  border-bottom: 5px solid transparent;
}
.hi .arrow { border-left-color: #fff; }

/* asset export panel */
.panel {
  position: absolute;
  left: 1102px;
  top: 424px;
  width: 315px;
  height: 477px;
  background: #424242;
  border-radius: 6px 6px 0 0;
  color: #b0b0b0;
  font-size: 11px;
  box-shadow: -1px 0 0 #2a2a2a;
}
.panel-head {
  height: 14px;
  display: flex;
  justify-content: space-between;
  padding: 0 6px 0 4px;
  background: #383838;
  border-radius: 6px 6px 0 0;
  line-height: 14px;
}
.panel-x { font-size: 14px; color: #bbb; }
.panel-tabs {
  height: 27px;
  display: flex;
  align-items: stretch;
  background: #383838;
}
.panel-tabs span {
  width: 39.500px;
  line-height: 27px;
  padding-left: 2px;
  text-align: center;
  color: #8a8a8a;
  border-right: 1px solid #303030;
}
.panel-tabs .cur { width: 60px; background: #444; color: #d0d0d0; }
.hamburger {
  width: 10px;
  height: 7px;
  margin: 10px 7px 0 auto;
  border-top: 1px solid #c0c0c0;
  border-bottom: 1px solid #c0c0c0;
  background: linear-gradient(#c0c0c0, #c0c0c0) center / 100% 1px no-repeat;
}
.assets {
  height: 218px;
  margin: 6px 6px 0;
  padding: 4px;
  border: 1px solid #4c4c4c;
}
.thumb {
  width: 64px;
  height: 65px;
  display: flex;
  align-items: center;
  justify-content: center;
  padding-bottom: 4px;
  background: #dcdcdc;
  border: 2px solid #3f8cf0;
  color: #b47b2a;
  font-size: 14px;
  font-family: "Liberation Serif", "Noto Sans CJK SC", serif;
  white-space: nowrap;
  letter-spacing: 0;
}
.thumb-name { margin-top: -1px; padding-left: 1px; font-size: 12px; line-height: 13px; color: #a8a8a8; }
.export-head {
  display: flex;
  align-items: center;
  margin: 0 6px;
  height: 20px;
  padding: 0 5px 3px;
  border-bottom: 2px solid #4c4c4c;
  font-size: 13px;
  color: #a0a0a0;
  gap: 5px;
}
.export-head .tri {
  width: 0;
  border-top: 6px solid #c0c0c0;
  border-left: 5px solid transparent;
  border-right: 5px solid transparent;
}
.push { margin-left: auto; margin-right: 5px; }
.platforms {
  display: flex;
  justify-content: flex-end;
  gap: 19px;
  padding: 2px 14px 0 0;
  font-family: "Lato", sans-serif;
  font-size: 11px;
  color: #b5b5b5;
  height: 20px;
}
.export-box {
  margin: 1px 6px 0;
  height: 162px;
  padding: 1px 6px;
  border: 1px solid #484848;
}
.ex-labels { display: flex; color: #6c6c6c; font-size: 13px; line-height: 13px; height: 19px; }
.l1 { width: 69px; }
.l2 { width: 114px; }
.ex-row { display: flex; height: 20px; gap: 1px; font-size: 11.500px; line-height: 20px; }
.f-scale { width: 56px; padding-left: 6px; background: #343434; color: #ccc; }
.f-drop {
  width: 19px;
  display: flex;
  align-items: center;
  justify-content: center;
  border: 1px solid #6c6c6c;
  border-radius: 2px;
}
.f-drop i {
  width: 0;
  border-top: 6px solid #d0d0d0;
  border-left: 4px solid transparent;
  border-right: 4px solid transparent;
}
.f-suffix { width: 104px; margin-left: 2px; padding-left: 7px; background: #383838; color: #5a5a5a; font-size: 10px; }
.f-format {
  width: 74px;
  margin-left: 2px;
  display: flex;
  align-items: center;
  justify-content: space-between;
  padding: 0 5px 0 4px;
  background: #393939;
  color: #c4c4c4;
}
.f-del { margin-left: 2px; font-size: 18px; color: #5f5f5f; }
.add-scale {
  height: 24px;
  width: 281px;
  margin-top: 10px;
  background: #333;
  display: flex;
  align-items: center;
  justify-content: center;
  gap: 6px;
  color: #c8c8c8;
  font-size: 13px;
}
.add-scale b { font-size: 18px; line-height: 18px; color: #ddd; }
```
